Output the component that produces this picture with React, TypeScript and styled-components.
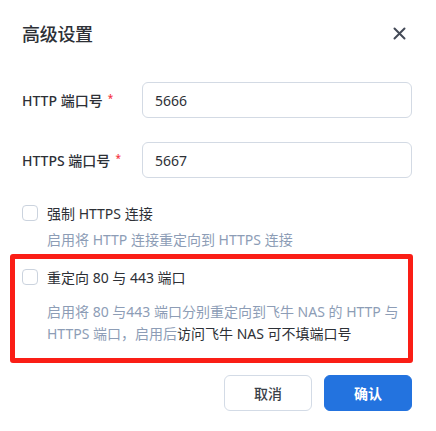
import React from "react";
import styled, { createGlobalStyle } from "styled-components";

const FONT = `"Noto Sans", "Noto Sans CJK SC", sans-serif`;

const GlobalStyle = createGlobalStyle`
  html, body { margin: 0; padding: 0; background: #ffffff; }
  body {
    font-family: ${FONT};
    color: #2b2f36;
    -webkit-font-smoothing: antialiased;
  }
`;

const Dialog = styled.div`
  width: 436px;
  height: 431px;
  box-sizing: border-box;
  padding: 0 24px 0 22px;
  background: #fff;
  display: flex;
  flex-direction: column;
`;

const Header = styled.div`
  height: 66px;
  display: flex;
  align-items: center;
  justify-content: space-between;
`;

const Title = styled.h1`
  margin: 0;
  font-size: 18px;
  font-weight: 500;
  color: #2d3036;
  letter-spacing: -0.3px;
`;

const CloseButton = styled.button`
  width: 20px;
  height: 20px;
  margin-right: 3px;
  padding: 0;
  border: none;
  background: none;
  display: flex;
  align-items: center;
  justify-content: center;
  color: #434a57;
  cursor: pointer;
`;

const Form = styled.div`
  padding-top: 16px;
  display: flex;
  flex-direction: column;
  gap: 24px;
`;

const FieldRow = styled.div`
  display: flex;
  align-items: center;
`;

const Label = styled.label`
  width: 120px;
  flex-shrink: 0;
  font-size: 14px;
  font-weight: 500;
  color: #2d3036;
  display: flex;
  align-items: flex-start;
`;

const Required = styled.span`
  color: #f5333f;
  font-size: 10px;
  line-height: 1;
  margin-left: 5px;
  margin-top: 3px;
`;

const Input = styled.input`
  width: 270px;
  height: 36px;
  box-sizing: border-box;
  border: 1px solid #d3dae4;
  border-radius: 6px;
  padding: 0 12px;
  font-family: ${FONT};
  font-size: 14px;
  color: #2d3036;
  outline: none;
`;

const Option = styled.div`
  display: flex;
  flex-direction: column;
`;

const OptionHead = styled.label`
  display: flex;
  align-items: center;
  height: 20px;
  font-size: 14px;
  color: #2d3036;
  gap: 9px;
`;

const Box = styled.span`
  width: 16px;
  height: 16px;
  box-sizing: border-box;
  border: 1px solid #cbd3de;
  border-radius: 4px;
  background: #fff;
  flex-shrink: 0;
`;

const Desc = styled.p<{ $gap: number }>`
  margin: ${(p) => p.$gap}px 0 0 25px;
  font-size: 14px;
  line-height: 22px;
  color: #8d9db6;
`;

const Strong = styled.span`
  color: #2d3036;
`;

const FirstOption = styled(Option)`
  margin-top: 25px;
`;

const Highlight = styled.div`
  position: relative;
  margin: 3px -1px 0 -12px;
  padding: 13px 1px 18px 12px;
  &::after {
    content: "";
    position: absolute;
    inset: 0;
    border: 5px solid #fa1e16;
    border-radius: 3px;
    pointer-events: none;
  }
`;

const Footer = styled.div`
  margin-top: 12px;
  display: flex;
  justify-content: flex-end;
  gap: 12px;
`;

const Button = styled.button<{ $primary?: boolean }>`
  width: 88px;
  height: 36px;
  border-radius: 6px;
  font-family: ${FONT};
  font-size: 14px;
  font-weight: ${(p) => (p.$primary ? 700 : 500)};
  border: 1px solid ${(p) => (p.$primary ? "#2373df" : "#d3dbe6")};
  background: ${(p) => (p.$primary ? "#2373df" : "#fff")};
  color: ${(p) => (p.$primary ? "#fff" : "#3a3f48")};
  cursor: pointer;
`;

export default function App() {
  return (
    <>
      <GlobalStyle />
      <Dialog>
        <Header>
          <Title>高级设置</Title>
          <CloseButton aria-label="关闭">
            <svg width="13" height="13" viewBox="0 0 13 13" fill="none">
              <path d="M1.5 1.5 L11.5 11.5 M11.5 1.5 L1.5 11.5" stroke="currentColor" strokeWidth="2" strokeLinecap="round" />
            </svg>
          </CloseButton>
        </Header>
        <Form>
          <FieldRow>
            <Label>
              HTTP 端口号<Required>*</Required>
            </Label>
            <Input defaultValue="5666" />
          </FieldRow>
          <FieldRow>
            <Label>
              HTTPS 端口号<Required>*</Required>
            </Label>
            <Input defaultValue="5667" />
          </FieldRow>
        </Form>
        <FirstOption>
          <OptionHead>
            <Box />
            强制 HTTPS 连接
          </OptionHead>
          <Desc $gap={6}>启用将 HTTP 连接重定向到 HTTPS 连接</Desc>
        </FirstOption>
        <Highlight>
          <Option>
            <OptionHead>
              <Box />
              重定向 80 与 443 端口
            </OptionHead>
            <Desc $gap={14}>
              启用将 80 与443 端口分别重定向到飞牛 NAS 的 HTTP 与 HTTPS 端口，启用后
              <Strong>访问飞牛 NAS 可不填端口号</Strong>
            </Desc>
          </Option>
        </Highlight>
        <Footer>
          <Button>取消</Button>
          <Button $primary>确认</Button>
        </Footer>
      </Dialog>
    </>
  );
}
